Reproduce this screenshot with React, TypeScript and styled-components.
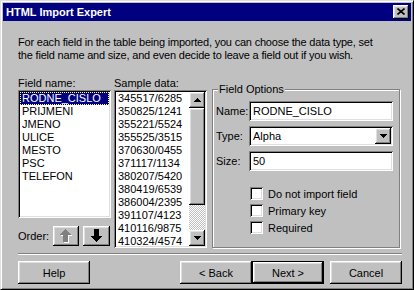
import React from 'react';
import styled, { createGlobalStyle } from 'styled-components';

const Global = createGlobalStyle`
  html, body { margin: 0; padding: 0; background: #c0c0c0; }
  body { font-family: "Liberation Sans", Arial, sans-serif; font-size: 11px; color: #000; }
  * { box-sizing: border-box; }
`;

const raised = `box-shadow: inset -1px -1px #000, inset 1px 1px #fff, inset -2px -2px #808080, inset 2px 2px #dfdfdf;`;
const sunken = `box-shadow: inset 1px 1px #808080, inset -1px -1px #fff, inset 2px 2px #000, inset -2px -2px #dfdfdf;`;

const Window = styled.div`
  width: 414px;
  height: 290px;
  background: #c0c0c0;
  border: 1px solid;
  border-color: #dfdfdf #000 #000 #dfdfdf;
  box-shadow: inset 1px 1px #fff, inset -1px -1px #808080;
  padding: 2px;
  display: flex;
  flex-direction: column;
`;

const TitleBar = styled.div`
  height: 18px;
  background: #000080;
  color: #fff;
  font-weight: bold;
  font-size: 11px;
  display: flex;
  align-items: center;
  justify-content: space-between;
  padding: 0 2px 0 3px;
`;

const CloseButton = styled.div`
  width: 16px;
  height: 14px;
  background: #c0c0c0;
  ${raised}
  display: flex;
  align-items: center;
  justify-content: center;
  padding-bottom: 1px;
`;

const Body = styled.div`
  flex: 1;
  padding: 15px 9px 0 15px;
  display: flex;
  flex-direction: column;
`;

const Intro = styled.p`
  margin: 0;
  line-height: 13px;
  letter-spacing: -0.2px;
  white-space: nowrap;
`;

const Main = styled.div`
  display: flex;
  margin-top: 15px;
`;

const Column = styled.div<{ $w: number; $gap: number }>`
  width: ${({ $w }) => $w}px;
  margin-right: ${({ $gap }) => $gap}px;
  display: flex;
  flex-direction: column;
`;

const Label = styled.div`
  height: 13px;
  line-height: 13px;
`;

const ListBox = styled.div<{ $h: number }>`
  height: ${({ $h }) => $h}px;
  background: #fff;
  ${sunken}
  padding: 2px;
  overflow: hidden;
  display: flex;
`;

const Items = styled.div`
  flex: 1;
  overflow: hidden;
`;

const Item = styled.div<{ $selected?: boolean }>`
  height: 13px;
  line-height: 13px;
  padding: 0 2px;
  white-space: nowrap;
  background: ${({ $selected }) => ($selected ? '#000080' : 'transparent')};
  color: ${({ $selected }) => ($selected ? '#fff' : '#000')};
  outline: ${({ $selected }) => ($selected ? '1px dotted #ffff80' : 'none')};
  outline-offset: -1px;
`;

const ScrollBar = styled.div`
  width: 16px;
  display: flex;
  flex-direction: column;
`;

const ScrollBtn = styled.div`
  width: 16px;
  height: 16px;
  flex: none;
  background: #c0c0c0;
  ${raised}
  display: flex;
  align-items: center;
  justify-content: center;
`;

const Thumb = styled.div`
  height: 97px;
  flex: none;
  background: #c0c0c0;
  ${raised}
`;

const Track = styled.div`
  flex: 1;
  background: repeating-conic-gradient(#c0c0c0 0 25%, #fff 0 50%) 0 0 / 2px 2px;
`;

const OrderRow = styled.div`
  display: flex;
  align-items: center;
  margin-top: 8px;
  height: 20px;
  gap: 4px;
`;

const OrderLabel = styled.span`
  width: 31px;
`;

const IconButton = styled.div<{ $w: number }>`
  width: ${({ $w }) => $w}px;
  height: 20px;
  background: #c0c0c0;
  ${raised}
  display: flex;
  align-items: center;
  justify-content: center;
`;

const Group = styled.fieldset`
  width: 188px;
  height: 165px;
  margin: 6px 0 0 0;
  padding: 5px 6px 0 3px;
  border: 1px solid #808080;
  box-shadow: 1px 1px #fff, inset 1px 1px #fff;
  min-width: 0;
`;

const Legend = styled.legend`
  padding: 0 1px;
  margin-left: 2px;
  line-height: 13px;
  background: #c0c0c0;
`;

const FormRow = styled.div`
  display: flex;
  align-items: center;
  height: 20px;
  & + & { margin-top: 5px; }
`;

const FieldLabel = styled.span`
  width: 33px;
`;

const TextBox = styled.div`
  width: 144px;
  height: 20px;
  background: #fff;
  ${sunken}
  padding: 2px 2px 2px 4px;
  display: flex;
  align-items: center;
  justify-content: space-between;
`;

const DropBtn = styled(ScrollBtn)`
  height: 16px;
`;

const CheckList = styled.div`
  margin: 16px 0 0 34px;
  display: flex;
  flex-direction: column;
  gap: 4px;
`;

const CheckRow = styled.div`
  display: flex;
  align-items: center;
  height: 13px;
  gap: 5px;
`;

const CheckBox = styled.span`
  width: 13px;
  height: 13px;
  background: #fff;
  ${sunken}
`;

const Separator = styled.div`
  margin-top: 5px;
  height: 2px;
  border-top: 1px solid #808080;
  border-bottom: 1px solid #fff;
`;

const ButtonRow = styled.div`
  display: flex;
  margin-top: 6px;
`;

const Button = styled.div<{ $default?: boolean; $gap?: number }>`
  width: 72px;
  height: 23px;
  margin-left: ${({ $gap }) => ($gap === undefined ? 0 : `${$gap}px`)};
  display: flex;
  align-items: center;
  justify-content: center;
  background: #c0c0c0;
  border: ${({ $default }) => ($default ? '1px solid #000' : 'none')};
  ${raised}
`;

const Spacer = styled.div`
  flex: 1;
`;

const Triangle = ({ down }: { down?: boolean }) => (
  <svg width="7" height="4" viewBox="0 0 7 4" shapeRendering="crispEdges">
    <path d={down ? 'M0 0H7L3.5 4Z' : 'M3.5 0L7 4H0Z'} fill="#000" />
  </svg>
);

const Arrow = ({ down, disabled }: { down?: boolean; disabled?: boolean }) => {
  const d = 'M5.5 0L11 6H8V13H3V6H0Z';
  const t = down ? 'rotate(180 5.5 6.5)' : undefined;
  return (
    <svg width="12" height="14" viewBox="0 0 12 14" shapeRendering="crispEdges">
      {disabled && <path d={d} transform={`translate(1 1) ${t ?? ''}`} fill="#fff" />}
      <path d={d} transform={t} fill={disabled ? '#808080' : '#000'} />
    </svg>
  );
};

const fields = ['RODNE_CISLO', 'PRIJMENI', 'JMENO', 'ULICE', 'MESTO', 'PSC', 'TELEFON'];
const samples = [
  '345517/6285', '350825/1241', '355221/5524', '355525/3515', '370630/0455', '371117/1134',
  '380207/5420', '380419/6539', '386004/2395', '391107/4123', '410116/9875', '410324/4574',
];

export default function App() {
  return (
    <>
      <Global />
      <Window>
        <TitleBar>
          <span>HTML Import Expert</span>
          <CloseButton>
            <svg width="8" height="7" viewBox="0 0 8 7">
              <path d="M0.5 0.5L7.5 6.5M7.5 0.5L0.5 6.5" stroke="#000" strokeWidth="1.6" />
            </svg>
          </CloseButton>
        </TitleBar>
        <Body>
          <Intro>
            For each field in the table being imported, you can choose the data type, set
            <br />
            the field name and size, and even decide to leave a field out if you wish.
          </Intro>
          <Main>
            <Column $w={93} $gap={3}>
              <Label>Field name:</Label>
              <ListBox $h={128}>
                <Items>
                  {fields.map((f, i) => (
                    <Item key={f} $selected={i === 0}>{f}</Item>
                  ))}
                </Items>
              </ListBox>
              <OrderRow>
                <OrderLabel>Order:</OrderLabel>
                <IconButton $w={26}><Arrow disabled /></IconButton>
                <IconButton $w={27}><Arrow down /></IconButton>
              </OrderRow>
            </Column>
            <Column $w={93} $gap={5}>
              <Label>Sample data:</Label>
              <ListBox $h={158}>
                <Items>
                  {samples.map((s) => (
                    <Item key={s}>{s}</Item>
                  ))}
                </Items>
                <ScrollBar>
                  <ScrollBtn><Triangle /></ScrollBtn>
                  <Thumb />
                  <Track />
                  <ScrollBtn><Triangle down /></ScrollBtn>
                </ScrollBar>
              </ListBox>
            </Column>
            <Group>
              <Legend>Field Options</Legend>
              <FormRow>
                <FieldLabel>Name:</FieldLabel>
                <TextBox>RODNE_CISLO</TextBox>
              </FormRow>
              <FormRow>
                <FieldLabel>Type:</FieldLabel>
                <TextBox>
                  <span>Alpha</span>
                  <DropBtn><Triangle down /></DropBtn>
                </TextBox>
              </FormRow>
              <FormRow>
                <FieldLabel>Size:</FieldLabel>
                <TextBox>50</TextBox>
              </FormRow>
              <CheckList>
                <CheckRow><CheckBox />Do not import field</CheckRow>
                <CheckRow><CheckBox />Primary key</CheckRow>
                <CheckRow><CheckBox />Required</CheckRow>
              </CheckList>
            </Group>
          </Main>
          <Separator />
          <ButtonRow>
            <Button>Help</Button>
            <Spacer />
            <Button>&lt; Back</Button>
            <Button $default>Next &gt;</Button>
            <Button $gap={6}>Cancel</Button>
          </ButtonRow>
        </Body>
      </Window>
    </>
  );
}
